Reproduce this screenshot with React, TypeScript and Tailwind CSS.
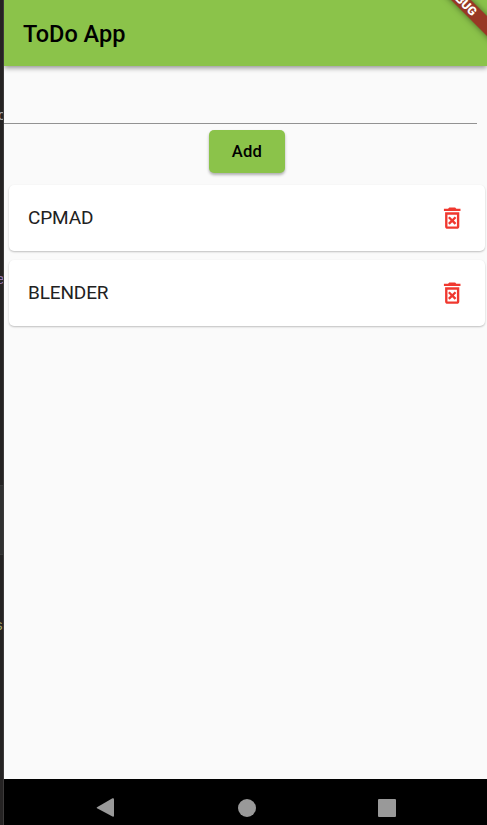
import { MdOutlineDeleteForever } from "react-icons/md";

const todos = ["CPMAD", "BLENDER"];

function TodoCard({ title }: { title: string }) {
  return (
    <li className="flex h-[66px] items-center justify-between rounded-[5px] bg-white pr-[19px] pl-[19px] shadow-[0_1px_2px_rgba(0,0,0,0.24)]">
      <span className="pb-[1px] text-[19px] leading-none tracking-[-0.15px] text-[#212121]">{title}</span>
      <button type="button" aria-label={"Delete " + title}>
        <MdOutlineDeleteForever className="size-[28.4px] text-[#f0382f]" />
      </button>
    </li>
  );
}

function EditorEdge() {
  return (
    <aside className="relative w-1 shrink-0 overflow-hidden border-r border-[#3c3a3a] bg-[#252323] font-['Liberation_Sans',sans-serif] text-[15px] leading-none">
      <span className="absolute top-[107px] left-[-2px] text-[#a5a5a5]">d</span>
      <span className="absolute top-[271px] left-[-4px] text-[#9876aa]">e</span>
      <div className="absolute top-[485px] h-[70px] w-full border-y border-[#393939] bg-[#303030]" />
      <span className="absolute top-[617px] left-[-5px] text-[#a5a56a]">s</span>
    </aside>
  );
}

export default function App() {
  return (
    <div className="flex h-[825px] w-[487px] overflow-hidden font-[Roboto,sans-serif]">
      <EditorEdge />
      <div className="relative flex min-w-0 flex-1 flex-col overflow-hidden bg-[#fafafa]">
        <header className="z-10 flex h-[66px] shrink-0 items-center bg-[#8bc34a] pl-[19px] shadow-[0_2px_5px_rgba(0,0,0,0.42)]">
          <h1 className="pt-[4px] text-[23.5px] leading-none font-medium text-black">ToDo App</h1>
        </header>
        <div className="absolute top-[-7px] left-[397px] z-20 flex h-[14px] w-[120px] rotate-45 items-center justify-center bg-[#983825] text-[12.1px] leading-none font-black text-white shadow-[0_0_6px_rgba(0,0,0,0.5)]">
          DEBUG
        </div>
        <main className="flex flex-1 flex-col">
          <input aria-label="New todo" className="mr-[10px] h-[58px] border-b border-[#929292] bg-transparent px-1 text-[19px] outline-none" />
          <button type="button" className="mt-[6px] ml-[3px] h-[43px] w-[76px] self-center rounded-[5px] bg-[#8bc34a] pt-[2px] text-[16.6px] font-medium tracking-[0.2px] text-black shadow-[0_2px_3px_rgba(0,0,0,0.3)]">
            Add
          </button>
          <ul className="mt-[12px] mr-[2px] ml-[5px] flex flex-col gap-[9.4px]">
            {todos.map((todo) => (
              <TodoCard key={todo} title={todo} />
            ))}
          </ul>
        </main>
        <nav className="flex h-[46px] shrink-0 items-start bg-black pt-[19px] pl-[92px]">
          <svg className="h-[20px] w-[18px] fill-[#999]" viewBox="0 0 18 20">
            <path d="M1 9.2 16.5.3Q18 0 18 1.2V17.8Q18 19 16.5 18.6L1 10.2Q.3 9.7 1 9.2Z" />
          </svg>
          <div className="mt-[1px] ml-[124px] size-[18px] rounded-full bg-[#999]" />
          <div className="mt-[1px] ml-[122px] size-[18px] rounded-[1px] bg-[#999]" />
        </nav>
      </div>
    </div>
  );
}
